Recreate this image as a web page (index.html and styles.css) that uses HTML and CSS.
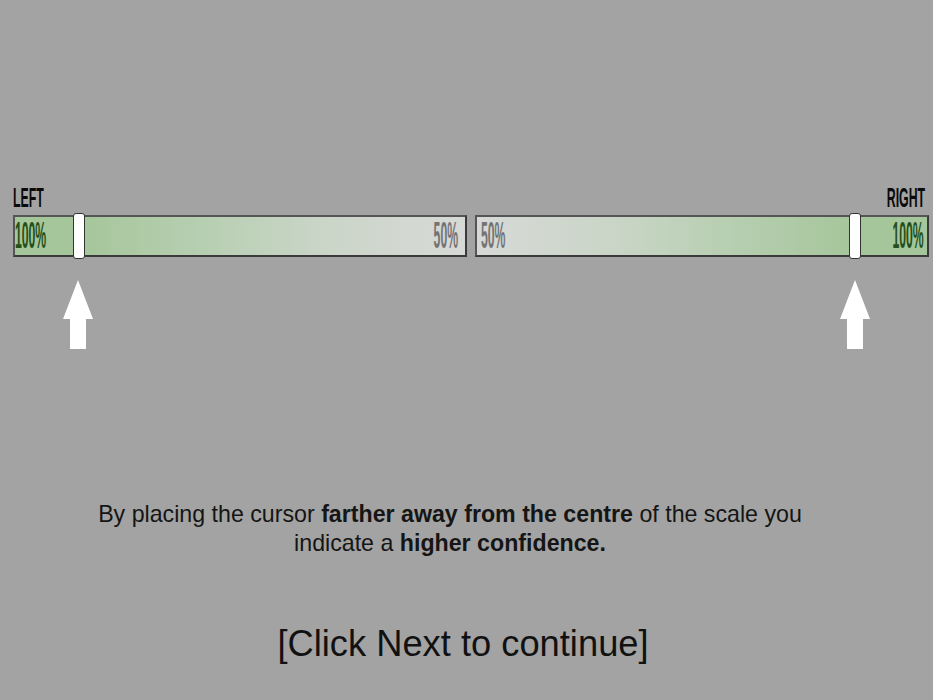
FILE: index.html
```html
<!DOCTYPE html>
<html>
<head>
<meta charset="utf-8">
<link rel="stylesheet" href="styles.css">
</head>
<body>
<main class="page">
  <section class="scale">
    <div class="labels">
      <span class="label"><span class="squeeze">LEFT</span></span>
      <span class="label label-right"><span class="squeeze squeeze-right">RIGHT</span></span>
    </div>
    <div class="bars">
      <div class="bar bar-left">
        <span class="pct pct-strong"><span class="squeeze">100%</span></span>
        <span class="pct pct-weak pct-end"><span class="squeeze squeeze-right">50%</span></span>
        <span class="thumb thumb-left"></span>
      </div>
      <div class="bar bar-right">
        <span class="pct pct-weak"><span class="squeeze">50%</span></span>
        <span class="pct pct-strong pct-end"><span class="squeeze squeeze-right">100%</span></span>
        <span class="thumb thumb-right"></span>
      </div>
    </div>
    <div class="arrows">
      <svg class="arrow arrow-left" width="32" height="70" viewBox="0 0 32 70"><path d="M16 0 L31 39 L24 39 L24 69 L8 69 L8 39 L1 39 Z" fill="#fff"/></svg>
      <svg class="arrow arrow-right" width="32" height="70" viewBox="0 0 32 70"><path d="M16 0 L31 39 L24 39 L24 69 L8 69 L8 39 L1 39 Z" fill="#fff"/></svg>
    </div>
  </section>
  <p class="info">By placing the cursor <b>farther away from the centre</b> of the scale you<br>indicate a <b>higher confidence.</b></p>
  <p class="next">[Click Next to continue]</p>
</main>
</body>
</html>
```
FILE: styles.css
```css
html, body {
  margin: 0;
  padding: 0;
  background: #a3a3a3;
}
body {
  font-family: "Liberation Sans", Arial, sans-serif;
  color: #111;
  width: 933px;
  height: 700px;
  overflow: hidden;
}
.page {
  display: flex;
  flex-direction: column;
}
.scale {
  padding-top: 182px;
}
.labels {
  display: flex;
  justify-content: space-between;
  padding: 0 8px 0 13px;
  height: 31px;
}
.label {
  font-weight: bold;
  font-size: 28px;
  line-height: 31px;
  color: #0a0a0a;
  display: flex;
  width: 40px;
  white-space: nowrap;
}
.label-right {
  justify-content: flex-end;
}
.squeeze {
  display: inline-block;
  flex: none;
  transform: scaleX(0.44);
  transform-origin: left center;
}
.squeeze-right {
  transform-origin: right center;
}
.bars {
  display: flex;
  gap: 8px;
  padding-left: 13px;
  margin-top: 2px;
}
.bar {
  position: relative;
  box-sizing: border-box;
  width: 454px;
  height: 42px;
  border: 2px solid #3a3a3a;
  border-top-color: #555;
  border-left-color: #555;
  display: flex;
  justify-content: space-between;
  align-items: center;
  padding: 0 7px 0 0;
}
.bar-left {
  background: linear-gradient(to right, #a4c69a 0, #a4c69a 60px, #a6c69c 72px, #b6ceb0 180px, #c9d5c6 300px, #d4d8d3 400px, #d6d9d5 100%);
}
.bar-right {
  padding: 0 3px 0 4px;
  background: linear-gradient(to left, #a4c69a 0, #a4c69a 68px, #a6c69c 80px, #b6ceb0 190px, #c9d5c6 310px, #d4d8d3 410px, #d6d9d5 100%);
}
.pct {
  display: flex;
  width: 40px;
  font-size: 37px;
  line-height: 38px;
  font-weight: bold;
  white-space: nowrap;
}
.pct-end {
  justify-content: flex-end;
}
.pct-strong {
  color: #25501a;
}
.pct-weak {
  color: #747474;
}
.pct .squeeze {
  transform: scaleX(0.33);
}
.thumb {
  position: absolute;
  top: -4px;
  width: 12px;
  height: 46px;
  box-sizing: border-box;
  background: #fff;
  border: 1px solid #333;
  border-radius: 3px;
}
.thumb-left {
  left: 58px;
}
.thumb-right {
  left: 372px;
}
.arrows {
  display: flex;
  padding-left: 62px;
  margin-top: 23px;
  height: 70px;
}
.arrow {
  display: block;
}
.arrow-right {
  margin-left: 745px;
}
.info {
  margin: 150px 0 0 0;
  width: 900px;
  text-align: center;
  font-size: 23.2px;
  line-height: 29px;
  color: #151515;
}
.next {
  margin: 66px 0 0 0;
  width: 926px;
  text-align: center;
  font-size: 36.3px;
  line-height: 40px;
  color: #111;
}
```
